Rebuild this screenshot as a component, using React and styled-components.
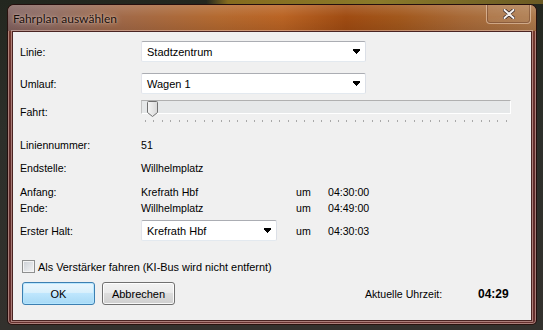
import React from 'react';
import styled, { createGlobalStyle } from 'styled-components';

const GlobalStyle = createGlobalStyle`
  html, body {
    margin: 0;
    padding: 0;
    background: #2a2c27;
  }
  * {
    box-sizing: border-box;
  }
`;

const Desktop = styled.div`
  width: 543px;
  height: 330px;
  padding: 4px 6px 5px 7px;
  overflow: hidden;
  background:
    linear-gradient(90deg, rgba(0, 0, 0, 0) 38%, rgba(150, 120, 30, 0.85) 42%, #8a7a2a 70%, #6a5a24 100%) top / 100% 4px no-repeat,
    linear-gradient(180deg, #23271f 0%, #2d2f2a 40%, #33312d 100%);
`;

const Window = styled.div`
  width: 530px;
  height: 321px;
  display: flex;
  flex-direction: column;
  border-radius: 7px 7px 5px 5px;
  border: 1px solid rgba(20, 8, 6, 0.8);
  box-shadow: inset 0 0 0 1px rgba(255, 225, 215, 0.45);
  background: linear-gradient(180deg, #7c3e2c 0%, #6a3330 20%, #5e2b2a 60%, #652f2d 100%);
  overflow: hidden;
`;

const TitleBar = styled.div`
  height: 26px;
  display: flex;
  align-items: flex-start;
  padding-left: 5px;
  background:
    linear-gradient(180deg, rgba(255, 255, 255, 0.14) 0%, rgba(255, 255, 255, 0) 45%, rgba(40, 10, 0, 0.12) 100%),
    linear-gradient(90deg, #836462 0%, #8e6a60 8%, #a26a48 22%, #b46a30 40%, #ba6424 52%, #a04c12 64%, #a2581c 74%, #a86a38 86%, #ad7a4c 100%);
`;

const TitleText = styled.div`
  margin-top: 6px;
  font-family: Lato, "Open Sans", sans-serif;
  font-size: 12px;
  color: #1a0e0a;
  text-shadow: 0 0 6px rgba(255, 235, 220, 0.7), 0 0 2px rgba(255, 235, 220, 0.6);
`;

const CloseButton = styled.div`
  margin-left: auto;
  margin-right: 5px;
  margin-top: -1px;
  width: 45px;
  height: 20px;
  display: flex;
  align-items: center;
  justify-content: center;
  border: 1px solid rgba(255, 230, 210, 0.45);
  border-top: none;
  border-radius: 0 0 4px 4px;
  box-shadow: inset 0 0 0 1px rgba(60, 20, 10, 0.3);
  background: linear-gradient(180deg, rgba(255, 255, 255, 0.04), rgba(255, 255, 255, 0.1));
`;

const Client = styled.div`
  flex: 1;
  margin: 0 4px 3px 4px;
  padding: 9px 0 0 7px;
  display: flex;
  flex-direction: column;
  background: #f0f0f0;
  border: 1px solid #4a2422;
  box-shadow: 0 0 0 1px rgba(255, 220, 210, 0.45);
  font-family: "Liberation Sans", Arial, sans-serif;
  font-size: 10.6px;
  color: #000;
`;

const Row = styled.div`
  display: flex;
  align-items: center;
  height: ${(p) => p.$h}px;
  margin-top: ${(p) => p.$mt}px;
  margin-left: ${(p) => p.$ml || 0}px;
`;

const Label = styled.div`
  width: 121px;
  flex-shrink: 0;
`;

const Value = styled.div`
  width: ${(p) => p.$w || 155}px;
  flex-shrink: 0;
`;

const Um = styled.div`
  width: 32px;
`;

const Combo = styled.div`
  width: ${(p) => p.$w}px;
  height: 21px;
  display: flex;
  align-items: center;
  justify-content: space-between;
  padding: 0 4px 0 5px;
  background: #fff;
  border: 1px solid #abadb3;
  border-left-color: #e2e3ea;
  border-right-color: #dbdfe6;
  border-bottom-color: #e3e9ef;
  border-radius: 2px;
  font-size: 11px;
`;

const Slider = styled.div`
  width: 370px;
  height: 24px;
  display: flex;
  flex-direction: column;
`;

const Track = styled.div`
  position: relative;
  height: 14px;
  background: #e6e8e9;
  border-top: 1px solid #b0b0b0;
  border-left: 1px solid #c4c4c4;
  border-bottom: 1px solid #fff;
  border-right: 1px solid #fff;
`;

const Thumb = styled.svg`
  position: absolute;
  left: 5px;
  top: 0px;
`;

const Ticks = styled.div`
  display: flex;
  justify-content: space-between;
  padding: 0 4px 0 4px;
  margin-top: 6px;
`;

const Tick = styled.span`
  width: 1px;
  height: 2px;
  background: #a8a8a8;
`;

const CheckBox = styled.div`
  width: 13px;
  height: 13px;
  margin-right: 3px;
  border: 1px solid #8e8f8f;
  box-shadow: inset 0 0 0 1px #f4f4f4;
  background: linear-gradient(135deg, #cbcfd5 0%, #e4e6e9 60%, #f4f4f4 100%);
`;

const CheckLabel = styled.span`
  font-size: 10.9px;
`;

const Button = styled.div`
  width: 73px;
  height: 23px;
  margin-right: ${(p) => p.$mr || 0}px;
  display: flex;
  align-items: center;
  justify-content: center;
  border-radius: 3px;
  font-size: 11px;
  border: 1px solid ${(p) => (p.$primary ? '#3c7fb1' : '#707070')};
  box-shadow: inset 0 0 0 1px ${(p) => (p.$primary ? 'rgba(180, 230, 255, 0.9)' : 'rgba(255, 255, 255, 0.85)')};
  background: ${(p) =>
    p.$primary
      ? 'linear-gradient(180deg, #eaf6fd 0%, #d9f0fc 45%, #bee6fd 50%, #a7d9f5 100%)'
      : 'linear-gradient(180deg, #f2f2f2 0%, #ebebeb 45%, #dddddd 50%, #cfcfcf 100%)'};
`;

const ClockLabel = styled.div`
  margin-left: 190px;
  width: 113px;
`;

const Clock = styled.div`
  font-weight: bold;
  font-size: 12px;
`;

const Arrow = () => (
  <svg width="8" height="5" viewBox="0 0 8 5">
    <path d="M0 0h7v2h-1v1h-1v1h-1v1h-1v-1h-1v-1h-1v-1h-1z" fill="#000" />
  </svg>
);

const Close = () => (
  <svg width="12" height="10" viewBox="0 0 12 10">
    <path
      d="M1.5 1 L10.5 9 M10.5 1 L1.5 9"
      stroke="#3a2a28"
      strokeWidth="3.6"
      strokeLinecap="round"
    />
    <path d="M1.5 1 L10.5 9 M10.5 1 L1.5 9" stroke="#f4f0ee" strokeWidth="2" strokeLinecap="round" />
  </svg>
);

const TICKS = Array.from({ length: 44 }, (_, i) => i);

export default function App() {
  return (
    <>
      <GlobalStyle />
      <Desktop>
        <Window>
          <TitleBar>
            <TitleText>Fahrplan auswählen</TitleText>
            <CloseButton>
              <Close />
            </CloseButton>
          </TitleBar>
          <Client>
            <Row $h={21} $mt={0}>
              <Label>Linie:</Label>
              <Combo $w={225}>
                <span>Stadtzentrum</span>
                <Arrow />
              </Combo>
            </Row>
            <Row $h={21} $mt={11}>
              <Label>Umlauf:</Label>
              <Combo $w={225}>
                <span>Wagen 1</span>
                <Arrow />
              </Combo>
            </Row>
            <Row $h={24} $mt={6}>
              <Label>Fahrt:</Label>
              <Slider>
                <Track>
                  <Thumb width="11" height="16" viewBox="0 0 11 16">
                    <defs>
                      <linearGradient id="tg" x1="0" x2="1" y1="0" y2="0">
                        <stop offset="0" stopColor="#f6f6f6" />
                        <stop offset="1" stopColor="#d8d8d8" />
                      </linearGradient>
                    </defs>
                    <path
                      d="M1.5 0.5 h8 a1 1 0 0 1 1 1 v10 l-5 4 l-5 -4 v-10 a1 1 0 0 1 1 -1z"
                      fill="url(#tg)"
                      stroke="#707070"
                    />
                  </Thumb>
                </Track>
                <Ticks>
                  {TICKS.map((i) => (
                    <Tick key={i} />
                  ))}
                </Ticks>
              </Slider>
            </Row>
            <Row $h={14} $mt={14}>
              <Label>Liniennummer:</Label>
              <Value>51</Value>
            </Row>
            <Row $h={14} $mt={9}>
              <Label>Endstelle:</Label>
              <Value>Willhelmplatz</Value>
            </Row>
            <Row $h={14} $mt={10}>
              <Label>Anfang:</Label>
              <Value>Krefrath Hbf</Value>
              <Um>um</Um>
              <span>04:30:00</span>
            </Row>
            <Row $h={14} $mt={2}>
              <Label>Ende:</Label>
              <Value>Willhelmplatz</Value>
              <Um>um</Um>
              <span>04:49:00</span>
            </Row>
            <Row $h={21} $mt={5}>
              <Label>Erster Halt:</Label>
              <Value $w={155}>
                <Combo $w={136}>
                  <span>Krefrath Hbf</span>
                  <Arrow />
                </Combo>
              </Value>
              <Um>um</Um>
              <span>04:30:03</span>
            </Row>
            <Row $h={13} $mt={19} $ml={2}>
              <CheckBox />
              <CheckLabel>Als Verstärker fahren (KI-Bus wird nicht entfernt)</CheckLabel>
            </Row>
            <Row $h={23} $mt={9} $ml={2}>
              <Button $primary $mr={7}>OK</Button>
              <Button>Abbrechen</Button>
              <ClockLabel>Aktuelle Uhrzeit:</ClockLabel>
              <Clock>04:29</Clock>
            </Row>
          </Client>
        </Window>
      </Desktop>
    </>
  );
}
